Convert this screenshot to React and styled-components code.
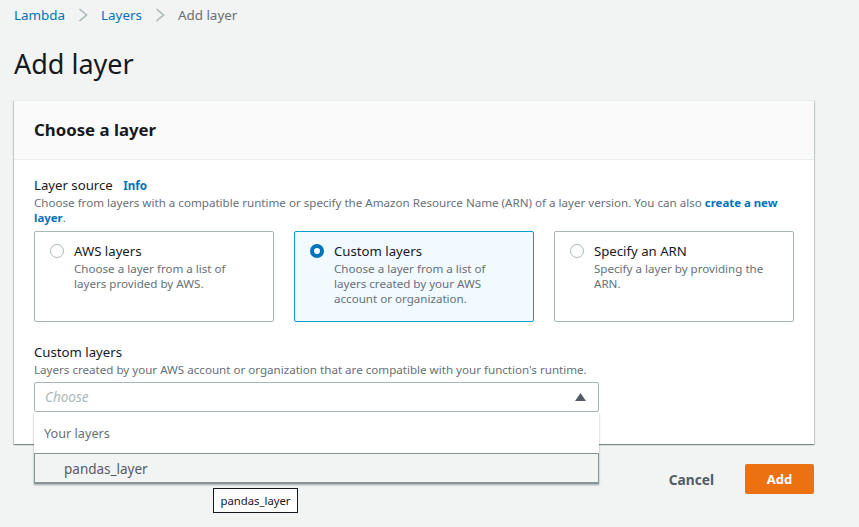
import React from 'react';
import styled, { createGlobalStyle } from 'styled-components';

const GlobalStyle = createGlobalStyle`
  html, body {
    margin: 0;
    padding: 0;
    height: 100%;
    background: #f2f3f3;
    overflow: hidden;
  }
  body {
    font-family: "Noto Sans", "Open Sans", sans-serif;
    color: #16191f;
  }
`;

const Page = styled.div`
  padding: 0 45px 0 14px;
  height: 527px;
  box-sizing: border-box;
`;

const Breadcrumbs = styled.nav`
  display: flex;
  align-items: center;
  height: 30px;
  font-size: 13.4px;
`;

const Crumb = styled.span`
  color: ${props => (props.$current ? '#687078' : '#0073bb')};
`;

const CrumbSep = styled.svg`
  width: 10px;
  height: 14px;
  margin: 0 13px 0 13px;
  fill: none;
  stroke: #aab7b8;
  stroke-width: 1.6;
`;

const Heading = styled.h1`
  margin: 3px 0 0;
  height: 67px;
  font-size: 27px;
  line-height: 62px;
  font-weight: 400;
`;

const Card = styled.section`
  background: #fff;
  border-top: 1px solid #eaeded;
  box-shadow: 0 1px 1px 0 rgba(0, 28, 36, 0.3), 1px 1px 1px 0 rgba(0, 28, 36, 0.15), -1px 1px 1px 0 rgba(0, 28, 36, 0.15);
`;

const CardHeader = styled.header`
  background: #fafafa;
  border-bottom: 1px solid #eaeded;
  box-sizing: border-box;
  height: 59px;
  padding: 0 20px 2px;
  display: flex;
  align-items: center;
`;

const CardTitle = styled.h2`
  margin: 0;
  font-size: 16.8px;
  font-weight: 700;
`;

const CardBody = styled.div`
  padding: 17px 20px 0;
  height: 284px;
  box-sizing: border-box;
  position: relative;
`;

const Label = styled.div`
  font-size: 13.2px;
  line-height: 17px;
  margin-bottom: 1px;
`;

const InfoLink = styled.a`
  margin-left: 7px;
  font-size: 11.6px;
  font-weight: 700;
  color: #0073bb;
`;

const Description = styled.div`
  font-size: 11.6px;
  line-height: 15px;
  color: #687078;
`;

const BoldLink = styled.a`
  font-size: 11.4px;
  font-weight: 700;
  color: #0073bb;
`;

const Tiles = styled.div`
  display: grid;
  grid-template-columns: repeat(3, 240px);
  column-gap: 20px;
  margin-top: 6px;
  margin-bottom: 22px;
`;

const Tile = styled.div`
  box-sizing: border-box;
  height: 91px;
  padding: 11px 15px;
  display: flex;
  gap: 10px;
  border: 1px solid ${props => (props.$selected ? '#00a1c9' : '#aab7b8')};
  border-radius: 2px;
  background: ${props => (props.$selected ? '#f1faff' : '#fff')};
`;

const Radio = styled.span`
  flex: none;
  box-sizing: border-box;
  width: 14px;
  height: 14px;
  margin-top: 1px;
  border-radius: 50%;
  border: ${props => (props.$checked ? '4px solid #0073bb' : '1px solid #aab7b8')};
  background: #fff;
`;

const TileText = styled.div`
  display: flex;
  flex-direction: column;
`;

const TileTitle = styled.div`
  font-size: 13.2px;
  line-height: 17px;
  margin-bottom: 1px;
`;

const Select = styled.div`
  box-sizing: border-box;
  width: 565px;
  height: 30px;
  margin-top: 5px;
  padding: 0 12px 0 10px;
  display: flex;
  align-items: center;
  justify-content: space-between;
  background: #fff;
  border: 1px solid #aab7b8;
  border-radius: 2px;
`;

const Placeholder = styled.span`
  font-size: 13.5px;
  font-style: italic;
  color: #aab7b8;
`;

const Caret = styled.svg`
  width: 11px;
  height: 8px;
  fill: #545b64;
`;

const Menu = styled.div`
  position: absolute;
  left: 20px;
  top: 252px;
  width: 565px;
  background: #fff;
  box-sizing: border-box;
  box-shadow: 0 1px 2px rgba(0, 28, 36, 0.35);
`;

const MenuGroup = styled.div`
  height: 41px;
  padding-left: 10px;
  font-size: 12.7px;
  line-height: 43px;
  color: #687078;
`;

const MenuItem = styled.div`
  box-sizing: border-box;
  height: 31px;
  padding-left: 29px;
  font-size: 13.5px;
  line-height: 30px;
  color: #545b64;
  background: #f2f3f3;
  border: 1px solid #879596;
  border-bottom-width: 2px;
`;

const Tooltip = styled.div`
  position: absolute;
  left: 199px;
  top: 328px;
  z-index: 3;
  box-sizing: border-box;
  width: 85px;
  height: 25px;
  background: #fff;
  border: 1px solid #16191f;
  font-size: 11.3px;
  line-height: 23px;
  text-align: center;
`;

const Actions = styled.div`
  display: flex;
  justify-content: flex-end;
  align-items: center;
  gap: 31px;
  margin-top: 20px;
`;

const CancelButton = styled.button`
  border: 0;
  padding: 0;
  background: none;
  font: 700 13.7px "Noto Sans", sans-serif;
  color: #545b64;
`;

const AddButton = styled.button`
  width: 69px;
  height: 30px;
  border: 0;
  border-radius: 2px;
  background: #ec7211;
  font: 700 13px "Noto Sans", sans-serif;
  color: #fff;
`;

const Separator = () => (
  <CrumbSep viewBox="0 0 10 14">
    <path d="M1.5 1l7 6-7 6" />
  </CrumbSep>
);

const tiles = [
  { title: 'AWS layers', text: 'Choose a layer from a list of layers provided by AWS.' },
  { title: 'Custom layers', text: 'Choose a layer from a list of layers created by your AWS account or organization.', selected: true },
  { title: 'Specify an ARN', text: 'Specify a layer by providing the ARN.' },
];

export default function App() {
  return (
    <Page>
      <GlobalStyle />
      <Breadcrumbs>
        <Crumb>Lambda</Crumb>
        <Separator />
        <Crumb>Layers</Crumb>
        <Separator />
        <Crumb $current>Add layer</Crumb>
      </Breadcrumbs>
      <Heading>Add layer</Heading>
      <Card>
        <CardHeader>
          <CardTitle>Choose a layer</CardTitle>
        </CardHeader>
        <CardBody>
          <Label>
            Layer source <InfoLink>Info</InfoLink>
          </Label>
          <Description>
            Choose from layers with a compatible runtime or specify the Amazon Resource Name (ARN) of a layer version. You can also{' '}
            <BoldLink>create a new layer</BoldLink>.
          </Description>
          <Tiles>
            {tiles.map(tile => (
              <Tile key={tile.title} $selected={tile.selected}>
                <Radio $checked={tile.selected} />
                <TileText>
                  <TileTitle>{tile.title}</TileTitle>
                  <Description>{tile.text}</Description>
                </TileText>
              </Tile>
            ))}
          </Tiles>
          <Label>Custom layers</Label>
          <Description>Layers created by your AWS account or organization that are compatible with your function's runtime.</Description>
          <Select>
            <Placeholder>Choose</Placeholder>
            <Caret viewBox="0 0 11 8">
              <path d="M5.5 0L11 8H0z" />
            </Caret>
          </Select>
          <Menu>
            <MenuGroup>Your layers</MenuGroup>
            <MenuItem>pandas_layer</MenuItem>
          </Menu>
          <Tooltip>pandas_layer</Tooltip>
        </CardBody>
      </Card>
      <Actions>
        <CancelButton>Cancel</CancelButton>
        <AddButton>Add</AddButton>
      </Actions>
    </Page>
  );
}
